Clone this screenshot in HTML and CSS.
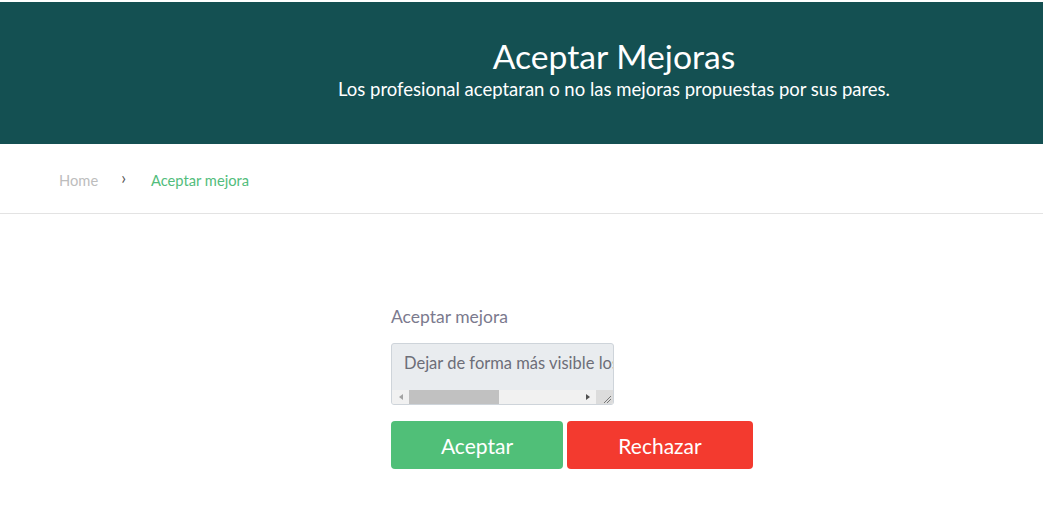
FILE: index.html
```html
<!DOCTYPE html>
<html lang="es">
<head>
<meta charset="utf-8">
<title>Aceptar Mejoras</title>
<link rel="stylesheet" href="styles.css">
</head>
<body>
<header class="hero">
  <div class="hero-inner">
    <h1 class="hero-title">Aceptar Mejoras</h1>
    <p class="hero-sub">Los profesional aceptaran o no las mejoras propuestas por sus pares.</p>
  </div>
</header>
<nav class="crumbs">
  <a class="crumb-home" href="#">Home</a>
  <span class="crumb-sep">&#8250;</span>
  <span class="crumb-current">Aceptar mejora</span>
</nav>
<main class="content">
  <form class="form">
    <label class="form-label" for="mejora">Aceptar mejora</label>
    <div class="area">
      <textarea id="mejora" class="area-input" wrap="off" readonly>Dejar de forma más visible los datos de contacto del profesional en la ficha</textarea>
      <div class="area-bar">
        <span class="bar-arrow bar-left"></span>
        <span class="bar-track"><span class="bar-thumb"></span></span>
        <span class="bar-arrow bar-right"></span>
        <span class="bar-corner">
          <svg width="17" height="14" viewBox="0 0 17 14"><path d="M8 13 L15 6 M11 13 L15 9" stroke="#777" stroke-width="1" fill="none"/></svg>
        </span>
      </div>
    </div>
    <div class="actions">
      <button type="button" class="btn btn-ok">Aceptar</button>
      <button type="button" class="btn btn-no">Rechazar</button>
    </div>
  </form>
</main>
</body>
</html>
```
FILE: styles.css
```css
html, body {
  margin: 0;
  padding: 0;
  background: #fff;
  font-family: "Lato", "Noto Sans", sans-serif;
}
.hero {
  margin-top: 2px;
  height: 142px;
  background: #145052;
  color: #fff;
  display: flex;
  justify-content: center;
  padding-left: 185px;
  box-sizing: border-box;
}
.hero-inner {
  display: flex;
  flex-direction: column;
  align-items: center;
  padding-top: 34px;
}
.hero-title {
  margin: 0;
  font-weight: 400;
  font-size: 33.7px;
  line-height: 40px;
}
.hero-sub {
  margin: 0;
  font-size: 18.5px;
  line-height: 24px;
  position: relative;
  top: 1px;
}
.crumbs {
  height: 70px;
  border-bottom: 1px solid #e3e3e3;
  display: flex;
  align-items: center;
  padding-left: 59px;
  font-size: 14.7px;
  padding-top: 2px;
  box-sizing: border-box;
}
.crumb-home {
  color: #bdbdbd;
  text-decoration: none;
}
.crumb-sep {
  color: #555;
  margin: 0 25px 0 23px;
  font-size: 17px;
  position: relative;
  top: -2px;
}
.crumb-current {
  color: #52bd7c;
}
.content {
  padding-top: 92px;
  padding-left: 391px;
}
.form {
  display: flex;
  flex-direction: column;
  align-items: flex-start;
}
.form-label {
  color: #7b7a8e;
  font-size: 17.5px;
  line-height: 22px;
  margin-bottom: 15px;
}
.area {
  width: 223px;
  box-sizing: border-box;
  border: 1px solid #ced4da;
  border-radius: 3px;
  background: #e9ecef;
  display: flex;
  flex-direction: column;
  overflow: hidden;
}
.area-input {
  display: block;
  height: 46px;
  box-sizing: border-box;
  border: none;
  background: transparent;
  padding: 7px 12px;
  margin: 0;
  font-family: inherit;
  font-size: 16.5px;
  line-height: 24px;
  color: #6d6e78;
  white-space: pre;
  overflow: hidden;
  resize: none;
  outline: none;
  width: 100%;
}
.area-bar {
  height: 14px;
  display: flex;
  background: #f1f1f1;
}
.bar-arrow {
  width: 17px;
  display: flex;
  align-items: center;
  justify-content: center;
}
.bar-left::before {
  content: "";
  border-top: 3.5px solid transparent;
  border-bottom: 3.5px solid transparent;
  border-right: 4px solid #a3a3a3;
}
.bar-right::before {
  content: "";
  border-top: 3.5px solid transparent;
  border-bottom: 3.5px solid transparent;
  border-left: 4px solid #505050;
}
.bar-track {
  flex: 1;
  display: flex;
}
.bar-thumb {
  width: 90px;
  background: #c1c1c1;
}
.bar-corner {
  width: 17px;
  background: #dcdcdc;
  display: block;
}
.bar-corner svg {
  display: block;
}
.actions {
  display: flex;
  gap: 4px;
  margin-top: 16px;
}
.btn {
  border: none;
  border-radius: 4px;
  color: #fff;
  font-family: inherit;
  font-size: 21px;
  height: 48px;
  cursor: pointer;
}
.btn-ok {
  width: 172px;
  background: #50bf78;
}
.btn-no {
  width: 186px;
  background: #f33a2f;
}
```
